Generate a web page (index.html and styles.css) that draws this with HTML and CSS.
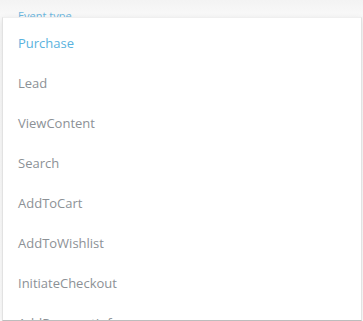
FILE: index.html
```html
<!DOCTYPE html>
<html>
<head>
<meta charset="utf-8">
<link rel="stylesheet" href="styles.css">
</head>
<body>
<div class="page">
  <div class="label">Event type</div>
  <div class="field"></div>
  <ul class="menu">
    <li class="item active">Purchase</li>
    <li class="item">Lead</li>
    <li class="item">ViewContent</li>
    <li class="item">Search</li>
    <li class="item">AddToCart</li>
    <li class="item">AddToWishlist</li>
    <li class="item">InitiateCheckout</li>
    <li class="item">AddPaymentInfo</li>
    <li class="item">CompleteRegistration</li>
  </ul>
</div>
</body>
</html>
```
FILE: styles.css
```css
html, body {
  margin: 0;
  padding: 0;
  width: 363px;
  height: 321px;
  overflow: hidden;
  background: #f7f7f7;
  font-family: "Open Sans", "Liberation Sans", sans-serif;
}
.page {
  position: relative;
  width: 363px;
  height: 321px;
  background: linear-gradient(#f3f3f3, #fafafa 20px, #ffffff);
}
.label {
  padding: 9px 0 0 18px;
  font-size: 11px;
  line-height: 14px;
  color: #6db7df;
}
.field {
  height: 300px;
}
.menu {
  position: absolute;
  top: 17px;
  left: 2px;
  width: 358px;
  height: 297px;
  overflow: hidden;
  margin: 0;
  padding: 5px 0 0;
  list-style: none;
  background: #fff;
  border: 1px solid #e2e2e2;
  border-top-color: #efefef;
  border-bottom-color: #bdbdbd;
  box-shadow: 0 2px 6px rgba(0, 0, 0, 0.12);
}
.item {
  height: 40px;
  line-height: 40px;
  padding-left: 15px;
  font-size: 13px;
  color: #8c9196;
}
.item.active {
  color: #5ab2de;
}
```
